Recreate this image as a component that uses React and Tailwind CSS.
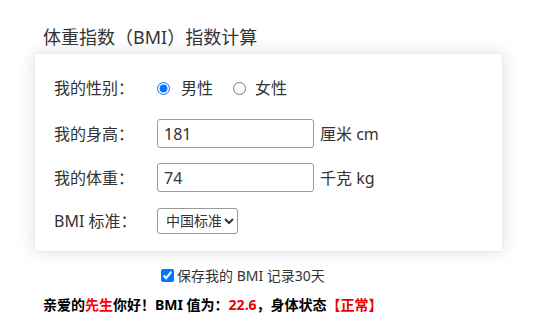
import React, { useState } from 'react';

const font = { fontFamily: '"Noto Sans", "Noto Sans CJK SC", sans-serif' };

export default function App() {
  const [gender, setGender] = useState('male');
  const [height, setHeight] = useState('181');
  const [weight, setWeight] = useState('74');
  const [save, setSave] = useState(true);

  const bmi = (Number(weight) / Math.pow(Number(height) / 100, 2)).toFixed(1);

  return (
    <div className="w-[533px] h-[321px] bg-white text-[#333] pt-[25px] pl-[34px]" style={font}>
      {/* Title */}
      <h1 className="pl-[9px] text-[18px] leading-[24px]">体重指数（BMI）指数计算</h1>

      {/* Form card */}
      <div className="mt-[4px] w-[469px] bg-white border border-[#eee] shadow-[0_0_16px_rgba(0,0,0,0.13)] pt-[19px] pb-[16px] px-[19px] text-[16px]">
        <div className="flex items-center h-[30px]">
          <span className="w-[103px]">我的性别：</span>
          <label className="flex items-center">
            <input
              type="radio"
              name="gender"
              checked={gender === 'male'}
              onChange={() => setGender('male')}
              className="m-0 w-[13px] h-[13px]"
            />
            <span className="ml-[11px]">男性</span>
          </label>
          <label className="flex items-center ml-[20px]">
            <input
              type="radio"
              name="gender"
              checked={gender === 'female'}
              onChange={() => setGender('female')}
              className="m-0 w-[13px] h-[13px]"
            />
            <span className="ml-[9px]">女性</span>
          </label>
        </div>

        <div className="flex items-center h-[29px] mt-[16px]">
          <span className="w-[103px]">我的身高：</span>
          <input
            value={height}
            onChange={(e) => setHeight(e.target.value)}
            className="w-[157px] h-[29px] border border-[#999] rounded-[3px] px-[6px] text-[16px] outline-none"
          />
          <span className="ml-[6px]">厘米 cm</span>
        </div>

        <div className="flex items-center h-[29px] mt-[15px]">
          <span className="w-[103px]">我的体重：</span>
          <input
            value={weight}
            onChange={(e) => setWeight(e.target.value)}
            className="w-[157px] h-[29px] border border-[#999] rounded-[3px] px-[6px] text-[16px] outline-none"
          />
          <span className="ml-[6px]">千克 kg</span>
        </div>

        <div className="flex items-center h-[29px] mt-[14px]">
          <span className="w-[103px]">BMI 标准：</span>
          <select className="w-[81px] h-[26px] border border-[#999] rounded-[3px] bg-white text-[14px] pl-[4px]">
            <option>中国标准</option>
            <option>国际标准</option>
          </select>
        </div>
      </div>

      {/* Save option */}
      <label className="flex items-center mt-[17px] ml-[127px] h-[12px] text-[14px] text-[#333]">
        <input
          type="checkbox"
          checked={save}
          onChange={(e) => setSave(e.target.checked)}
          className="m-0 w-[13px] h-[13px]"
        />
        <span className="ml-[3px]">保存我的 BMI 记录30天</span>
      </label>

      {/* Result */}
      <p className="mt-[14px] pl-[9px] text-[14px] font-bold text-black leading-[20px]">
        亲爱的<span className="text-[#f00]">先生</span>你好！BMI 值为：
        <span className="text-[#e00]">{bmi}</span>，身体状态
        <span className="text-[#e00]">【正常】</span>
      </p>
    </div>
  );
}
